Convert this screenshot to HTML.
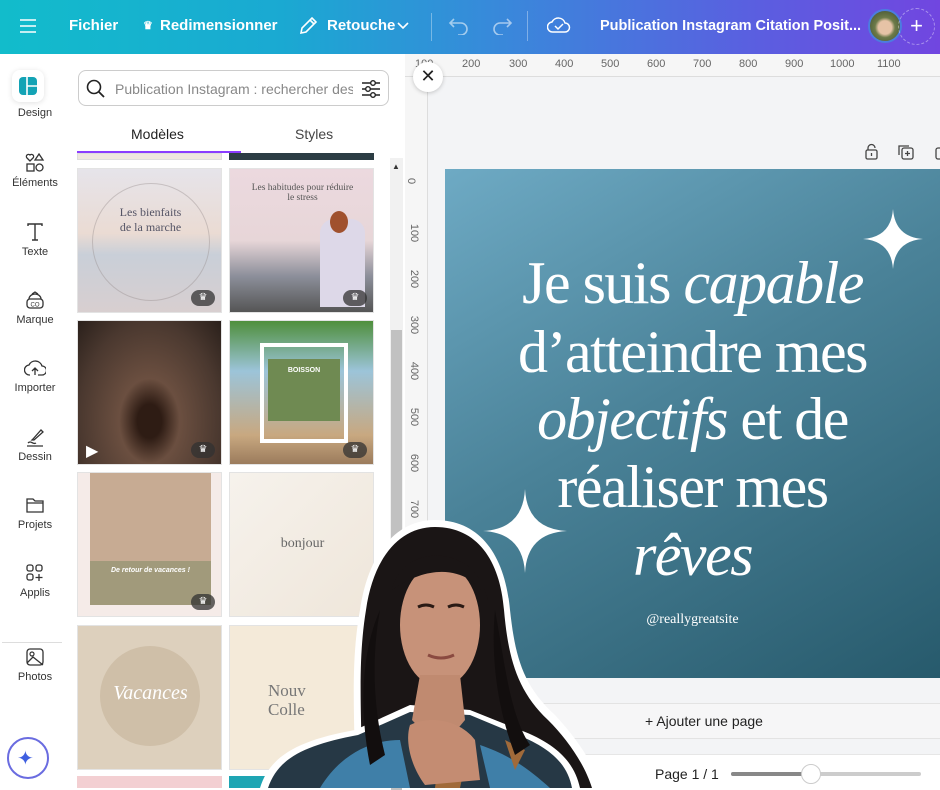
<!DOCTYPE html>
<html><head><meta charset="utf-8"><style>
*{box-sizing:border-box;margin:0;padding:0}
body{width:940px;height:788px;overflow:hidden;font-family:"Liberation Sans",sans-serif;background:#fff;position:relative}
.abs{position:absolute}
#top{left:0;top:0;width:940px;height:54px;background:linear-gradient(90deg,#12bccb 0%,#1aa9d2 30%,#3b86db 55%,#5a5fe0 80%,#7146e0 100%);color:#fff}
#top .t{position:absolute;top:17px;font-weight:bold;font-size:15px}
.side{left:0;top:54px;width:70px;height:734px;background:#fff}
.si{position:absolute;left:0;width:70px;text-align:center;font-size:11px;color:#333}
.si svg{display:block;margin:0 auto 4px}
.thumb{position:absolute;width:145px;height:145px;border:1px solid #e3e3e3;overflow:hidden}
.crown{position:absolute;right:6px;bottom:6px;width:24px;height:16px;border-radius:8px;background:rgba(50,50,50,.75);color:#fff;font-size:10px;text-align:center;line-height:16px}
.card{left:445px;top:169px;width:495px;height:509px;background:linear-gradient(150deg,#6eaac4 0%,#4a8298 45%,#275a6c 100%)}
.q{position:absolute;width:495px;left:0;text-align:center;color:#fff;font-family:"Liberation Serif",serif;font-size:60px;letter-spacing:-1.5px;line-height:60px}
.q i{font-style:italic}
</style></head><body>
<div id="top" class="abs">
 <svg class="abs" style="left:19px;top:18px" width="18" height="16"><path d="M1 2h16M1 8h16M1 14h16" stroke="#fff" stroke-width="1.6"/></svg>
 <span class="t" style="left:69px">Fichier</span>
 <span class="t" style="left:143px;font-size:11px;top:19px">♛</span>
 <span class="t" style="left:160px">Redimensionner</span>
 <svg class="abs" style="left:298px;top:16px" width="20" height="20"><path d="M3 17l1-5L14 2l4 4L8 16z M12 4l4 4" stroke="#fff" stroke-width="1.6" fill="none"/></svg>
 <span class="t" style="left:327px">Retouche</span>
 <svg class="abs" style="left:397px;top:22px" width="12" height="8"><path d="M1 1l5 5 5-5" stroke="#fff" stroke-width="1.6" fill="none"/></svg>
 <div class="abs" style="left:431px;top:13px;width:1px;height:28px;background:rgba(255,255,255,.35)"></div>
 <svg class="abs" style="left:448px;top:17px" width="22" height="18"><path d="M6 2L2 6l4 4M2 6h11a6 6 0 010 12h-3" stroke="rgba(255,255,255,.55)" stroke-width="1.6" fill="none"/></svg>
 <svg class="abs" style="left:491px;top:17px" width="22" height="18"><path d="M16 2l4 4-4 4M20 6H9a6 6 0 000 12h3" stroke="rgba(255,255,255,.55)" stroke-width="1.6" fill="none"/></svg>
 <div class="abs" style="left:527px;top:11px;width:1px;height:30px;background:rgba(255,255,255,.35)"></div>
 <svg class="abs" style="left:547px;top:15px" width="24" height="20"><path d="M6 17a5 5 0 01-1-10 7 7 0 0113 1 4.5 4.5 0 010 9z M8 11l3 3 5-5" stroke="#fff" stroke-width="1.5" fill="none"/></svg>
 <span class="t" style="left:600px;font-size:14.5px;top:18px">Publication Instagram Citation Posit...</span>
 <div class="abs" style="left:868px;top:9px;width:34px;height:34px;border-radius:50%;background:radial-gradient(circle at 50% 55%,#e6c3a6 0 30%,#6d7b4a 45%,#3b4a2c 100%);border:2px solid #4c7ce0"></div>
 <div class="abs" style="left:898px;top:8px;width:37px;height:37px;border-radius:50%;border:1px dashed rgba(255,255,255,.4);text-align:center;line-height:34px;font-size:22px">+</div>
</div>

<div class="abs side">
 <div class="abs" style="left:12px;top:16px;width:32px;height:32px;border-radius:8px;background:#fff;box-shadow:0 1px 6px rgba(0,0,0,.12)"></div>
 <svg class="abs" style="left:19px;top:23px" width="18" height="18"><rect width="18" height="18" rx="4" fill="#13a3b5"/><path d="M8 0v18M8 9h10" stroke="#fff" stroke-width="1.6"/></svg>
 <div class="si" style="top:53px">Design</div>
 <div class="si" style="top:99px"><svg width="20" height="20"><path d="M5 8L2 5a2 2 0 013-3 2 2 0 013 3z M14 1l4 6h-8z" stroke="#333" stroke-width="1.3" fill="none"/><rect x="2" y="11" width="7" height="7" stroke="#333" stroke-width="1.3" fill="none"/><circle cx="14.5" cy="14.5" r="3.5" stroke="#333" stroke-width="1.3" fill="none"/></svg>Éléments</div>
 <div class="si" style="top:168px"><svg width="20" height="20"><path d="M3 4V2h14v2M10 2v16M7 18h6" stroke="#333" stroke-width="1.4" fill="none"/></svg>Texte</div>
 <div class="si" style="top:236px"><svg width="20" height="20"><rect x="2" y="9" width="16" height="9" rx="3" stroke="#333" stroke-width="1.3" fill="none"/><path d="M4 9a6 5 0 0112 0M7 4l3-2 3 2" stroke="#333" stroke-width="1.3" fill="none"/><text x="10" y="16.5" font-size="6" text-anchor="middle" fill="#333" font-family="Liberation Sans">CO</text></svg>Marque</div>
 <div class="si" style="top:304px"><svg width="22" height="20"><path d="M6 17a5 5 0 01-1-10 7 7 0 0113 1 4.5 4.5 0 010 9H14M11 17v-7M8 13l3-3 3 3" stroke="#333" stroke-width="1.3" fill="none"/></svg>Importer</div>
 <div class="si" style="top:373px"><svg width="20" height="20"><path d="M8 12l8-9 2 2-9 8-2 0z M3 16c3-3 5 2 8 0M2 19h16" stroke="#333" stroke-width="1.3" fill="none"/></svg>Dessin</div>
 <div class="si" style="top:441px"><svg width="20" height="20"><path d="M2 4h6l2 2h8v11H2z M2 8h16" stroke="#333" stroke-width="1.3" fill="none"/></svg>Projets</div>
 <div class="si" style="top:509px"><svg width="20" height="20"><rect x="2" y="2" width="6" height="6" rx="2" stroke="#333" stroke-width="1.3" fill="none"/><rect x="11" y="2" width="6" height="6" rx="2" stroke="#333" stroke-width="1.3" fill="none"/><rect x="2" y="11" width="6" height="6" rx="2" stroke="#333" stroke-width="1.3" fill="none"/><path d="M14 11v7M10.5 14.5h7" stroke="#333" stroke-width="1.3"/></svg>Applis</div>
 <div class="abs" style="left:2px;top:588px;width:60px;height:1px;background:#ddd"></div>
 <div class="si" style="top:593px"><svg width="20" height="20"><rect x="2" y="2" width="16" height="16" rx="3" stroke="#333" stroke-width="1.3" fill="none"/><circle cx="7" cy="7" r="2" stroke="#333" stroke-width="1.2" fill="none"/><path d="M2 16l6-6 10 8" stroke="#333" stroke-width="1.3" fill="none"/></svg>Photos</div>
 <div class="abs" style="left:7px;top:683px;width:42px;height:42px;border-radius:50%;border:2px solid #6a6ce0;background:#fff"></div>
 <div class="abs" style="left:17px;top:692px;color:#3f5fe0;font-size:20px">✦</div>
</div>

<!-- panel -->
<div class="abs" style="left:78px;top:70px;width:311px;height:36px;border:1px solid #ccc;border-radius:8px"></div>
<svg class="abs" style="left:86px;top:79px" width="20" height="20"><circle cx="8" cy="8" r="6.5" stroke="#222" stroke-width="1.6" fill="none"/><path d="M13 13l5 5" stroke="#222" stroke-width="1.8"/></svg>
<div class="abs" style="left:115px;top:81px;font-size:14px;color:#888;width:238px;overflow:hidden;white-space:nowrap">Publication Instagram : rechercher des</div>
<svg class="abs" style="left:361px;top:79px" width="20" height="20"><path d="M1 4h18M1 10h18M1 16h18" stroke="#222" stroke-width="1.4"/><circle cx="12" cy="4" r="2.3" fill="#fff" stroke="#222" stroke-width="1.4"/><circle cx="7" cy="10" r="2.3" fill="#fff" stroke="#222" stroke-width="1.4"/><circle cx="12" cy="16" r="2.3" fill="#fff" stroke="#222" stroke-width="1.4"/></svg>
<div class="abs" style="left:131px;top:126px;font-size:14px;color:#222">Modèles</div>
<div class="abs" style="left:295px;top:126px;font-size:14px;color:#444">Styles</div>
<div class="abs" style="left:77px;top:151px;width:164px;height:2px;background:#8b3dff"></div>
<div class="abs" style="left:77px;top:153px;width:145px;height:7px;background:#efe7df;border:1px solid #ddd"></div>
<div class="abs" style="left:229px;top:153px;width:145px;height:7px;background:#2c3d44"></div>
<div class="abs" style="left:390px;top:158px;width:13px;height:630px;background:#f1f1f1"></div>
<div class="abs" style="left:392px;top:162px;font-size:8px;color:#333">▲</div>
<div class="abs" style="left:391px;top:330px;width:11px;height:460px;background:#c1c1c1"></div>

<div class="thumb" style="left:77px;top:168px;background:linear-gradient(180deg,#e6e4ea 0%,#eadbd3 45%,#c9cfd8 60%,#d8cfd0 100%)">
 <div class="abs" style="left:14px;top:14px;width:118px;height:118px;border-radius:50%;border:1px solid rgba(150,140,140,.4)"></div>
 <div class="abs" style="left:0;width:145px;top:36px;text-align:center;font-family:'Liberation Serif',serif;font-size:12px;color:#556">Les bienfaits<br>de la marche</div>
 <div class="crown">♛</div></div>
<div class="thumb" style="left:229px;top:168px;background:linear-gradient(180deg,#ecd9df 0%,#e7d6d8 50%,#8c8f9a 75%,#555 100%)">
 <div class="abs" style="left:0;width:145px;top:14px;text-align:center;font-family:'Liberation Serif',serif;font-size:9.5px;color:#555">Les habitudes pour réduire<br>le stress</div>
 <div class="abs" style="left:90px;top:50px;width:45px;height:88px;background:#ddd8e8;border-radius:14px 14px 0 0"></div>
 <div class="abs" style="left:100px;top:42px;width:18px;height:22px;background:#a0512e;border-radius:50%"></div>
 <div class="crown">♛</div></div>
<div class="thumb" style="left:77px;top:320px;background:radial-gradient(ellipse at 50% 70%,#2e1c14 0 12%,#6b4f40 30%,#4a382f 70%,#2a201b 100%)"><div class="abs" style="left:8px;top:120px;color:#fff;font-size:16px">▶</div><div class="crown">♛</div></div>
<div class="thumb" style="left:229px;top:320px;background:linear-gradient(180deg,#4f8f3c 0%,#9cc4d9 35%,#c8a880 80%,#9b7b5c 100%)">
 <div class="abs" style="left:30px;top:22px;width:88px;height:100px;border:4px solid #fff"></div>
 <div class="abs" style="left:38px;top:38px;width:72px;height:62px;background:#6f8a52;color:#fff;font-size:7px;font-weight:bold;text-align:center;padding-top:8px">BOISSON</div>
 <div class="crown">♛</div></div>
<div class="thumb" style="left:77px;top:472px;background:#f5ebe8">
 <div class="abs" style="left:12px;top:0;width:121px;height:88px;background:#c7ab93"></div>
 <div class="abs" style="left:12px;top:88px;width:121px;height:44px;background:#a19a7b;color:#fff;font-size:7px;text-align:center;padding-top:6px;font-style:italic;font-weight:bold">De retour de vacances !</div>
 <div class="crown">♛</div></div>
<div class="thumb" style="left:229px;top:472px;background:linear-gradient(135deg,#f6f2ec,#efe6da)">
 <div class="abs" style="left:0;width:145px;top:63px;text-align:center;font-family:'Liberation Serif',serif;font-size:14px;color:#666">bonjour</div></div>
<div class="thumb" style="left:77px;top:625px;background:#ddd0bd">
 <div class="abs" style="left:22px;top:20px;width:100px;height:100px;border-radius:50%;background:#cfbfa8"></div>
 <div class="abs" style="left:0;width:145px;top:56px;text-align:center;font-family:'Liberation Serif',serif;font-style:italic;font-size:20px;color:#fff">Vacances</div></div>
<div class="thumb" style="left:229px;top:625px;background:#f4ead9">
 <div class="abs" style="left:38px;top:55px;font-family:'Liberation Serif',serif;font-size:17px;color:#777;line-height:19px">Nouv<br>Colle</div></div>
<div class="abs" style="left:77px;top:776px;width:145px;height:12px;background:#f3cfd2"></div>
<div class="abs" style="left:229px;top:776px;width:145px;height:12px;background:#1ea5b3"></div>

<!-- canvas -->
<div class="abs" style="left:405px;top:54px;width:535px;height:734px;background:#f3f4f6;border-left:1px solid #e0e0e0"></div>
<div class="abs" style="left:405px;top:54px;width:535px;height:23px;background:#f6f6f6;border-bottom:1px solid #ddd;font-size:11px;color:#666">
 <span class="abs" style="left:10px;top:4px">100</span><span class="abs" style="left:57px;top:4px">200</span><span class="abs" style="left:104px;top:4px">300</span><span class="abs" style="left:150px;top:4px">400</span><span class="abs" style="left:196px;top:4px">500</span><span class="abs" style="left:242px;top:4px">600</span><span class="abs" style="left:288px;top:4px">700</span><span class="abs" style="left:334px;top:4px">800</span><span class="abs" style="left:380px;top:4px">900</span><span class="abs" style="left:425px;top:4px">1000</span><span class="abs" style="left:472px;top:4px">1100</span>
</div>
<div class="abs" style="left:405px;top:77px;width:23px;height:620px;background:#f6f6f6;border-right:1px solid #ddd;font-size:11px;color:#666">
 <span class="abs" style="left:3px;top:98px;transform:rotate(90deg)">0</span>
 <span class="abs" style="left:0;top:150px;transform:rotate(90deg)">100</span><span class="abs" style="left:0;top:196px;transform:rotate(90deg)">200</span><span class="abs" style="left:0;top:242px;transform:rotate(90deg)">300</span><span class="abs" style="left:0;top:288px;transform:rotate(90deg)">400</span><span class="abs" style="left:0;top:334px;transform:rotate(90deg)">500</span><span class="abs" style="left:0;top:380px;transform:rotate(90deg)">600</span><span class="abs" style="left:0;top:426px;transform:rotate(90deg)">700</span>
</div>
<div class="abs" style="left:413px;top:62px;width:30px;height:30px;border-radius:50%;background:#fff;box-shadow:0 1px 4px rgba(0,0,0,.2);text-align:center;line-height:29px;font-size:18px;color:#222">✕</div>
<svg class="abs" style="left:864px;top:143px" width="76" height="18"><rect x="2" y="7" width="11" height="9" rx="1.5" stroke="#444" stroke-width="1.3" fill="none"/><path d="M4 7V5a3.5 3.5 0 017 0" stroke="#444" stroke-width="1.3" fill="none"/><path d="M7.5 10v3" stroke="#444" stroke-width="1.3"/><rect x="38" y="5" width="11" height="11" rx="2" stroke="#444" stroke-width="1.3" fill="none"/><path d="M35 12V3h10M43.5 8v5M41 10.5h5" stroke="#444" stroke-width="1.3" fill="none"/><rect x="72" y="5" width="10" height="11" rx="2" stroke="#444" stroke-width="1.3" fill="none"/></svg>

<div class="abs card">
 <div class="q" style="top:84px">Je suis <i>capable</i></div>
 <div class="q" style="top:153px">d’atteindre mes</div>
 <div class="q" style="top:220px"><i>objectifs</i> et de</div>
 <div class="q" style="top:288px">réaliser mes</div>
 <div class="q" style="top:356px"><i>rêves</i></div>
 <div class="abs" style="left:0;width:495px;top:443px;text-align:center;color:#fff;font-family:'Liberation Serif',serif;font-size:14px">@reallygreatsite</div>
 <svg class="abs" style="left:418px;top:40px" width="60" height="60"><path d="M30 0Q32 28 60 30Q32 32 30 60Q28 32 0 30Q28 28 30 0z" fill="#fff"/></svg>
 <svg class="abs" style="left:38px;top:320px" width="84" height="84"><path d="M42 0Q44 40 84 42Q44 44 42 84Q40 44 0 42Q40 40 42 0z" fill="#fff"/></svg>
</div>
<div class="abs" style="left:428px;top:703px;width:512px;height:36px;background:#f6f6f7;border-top:1px solid #e3e3e3;border-bottom:1px solid #e3e3e3;text-align:center;line-height:34px;font-size:14px;color:#222;padding-left:40px">+ Ajouter une page</div>
<div class="abs" style="left:405px;top:754px;width:535px;height:34px;background:#fff;border-top:1px solid #e6e6e6"></div>
<div class="abs" style="left:655px;top:766px;font-size:14px;color:#222">Page 1 / 1</div>
<div class="abs" style="left:731px;top:772px;width:190px;height:4px;border-radius:2px;background:#ccc"></div>
<div class="abs" style="left:731px;top:772px;width:80px;height:4px;border-radius:2px;background:#888"></div>
<div class="abs" style="left:801px;top:764px;width:20px;height:20px;border-radius:50%;background:#fff;border:1px solid #ccc"></div>

<!-- person -->
<svg class="abs" style="left:260px;top:515px" width="345" height="273">
 <path d="M95 273 C95 200 90 150 100 95 C108 40 135 5 175 5 C220 5 245 40 250 95 C255 140 262 170 295 200 C318 225 335 250 340 273z" fill="#fff"/>
 <path d="M102 273 C102 200 97 150 106 95 C113 45 138 12 175 12 C217 12 240 45 244 95 C248 140 256 175 288 205 C308 225 325 250 332 273z" fill="#1a1515"/>
 <path d="M0 273 C10 240 40 225 95 215 L150 190 L210 195 L260 215 C300 230 315 250 320 273z" fill="#fff"/>
 <path d="M8 273 C18 243 45 230 98 220 L150 197 L210 200 L258 220 C295 235 308 252 312 273z" fill="#263845"/>
 <path d="M60 273 C80 240 110 225 140 225 L150 273z M220 230 C250 240 270 255 290 273 L230 273z" fill="#3f7fa8"/>
 <path d="M180 230 L205 250 L200 273 L175 273z M245 225 L265 235 L255 255z" fill="#a06a3a"/>
 <path d="M120 95 C110 150 115 200 125 240 L110 250 C100 200 100 140 120 95z M235 95 C245 150 250 200 270 230 L255 240 C240 200 230 150 235 95z" fill="#120e0e"/>
 <ellipse cx="180" cy="110" rx="40" ry="62" fill="#c79279"/>
 <path d="M160 160 L200 160 L205 205 L180 235 L152 205z" fill="#c08a70"/>
 <path d="M132 75 C140 30 215 25 228 85 C212 55 175 45 132 75z" fill="#1a1515"/>
 <path d="M158 92q8-4 16 0M188 92q8-4 16 0" stroke="#2a1a14" stroke-width="3" fill="none"/>
 <path d="M168 140q13 6 26 0" stroke="#8a4a40" stroke-width="3" fill="none"/>
 <path d="M150 210 C170 200 200 205 215 225 L220 265 L165 270 C150 250 145 225 150 210z" fill="#c48c72"/>
</svg>
</body></html>
